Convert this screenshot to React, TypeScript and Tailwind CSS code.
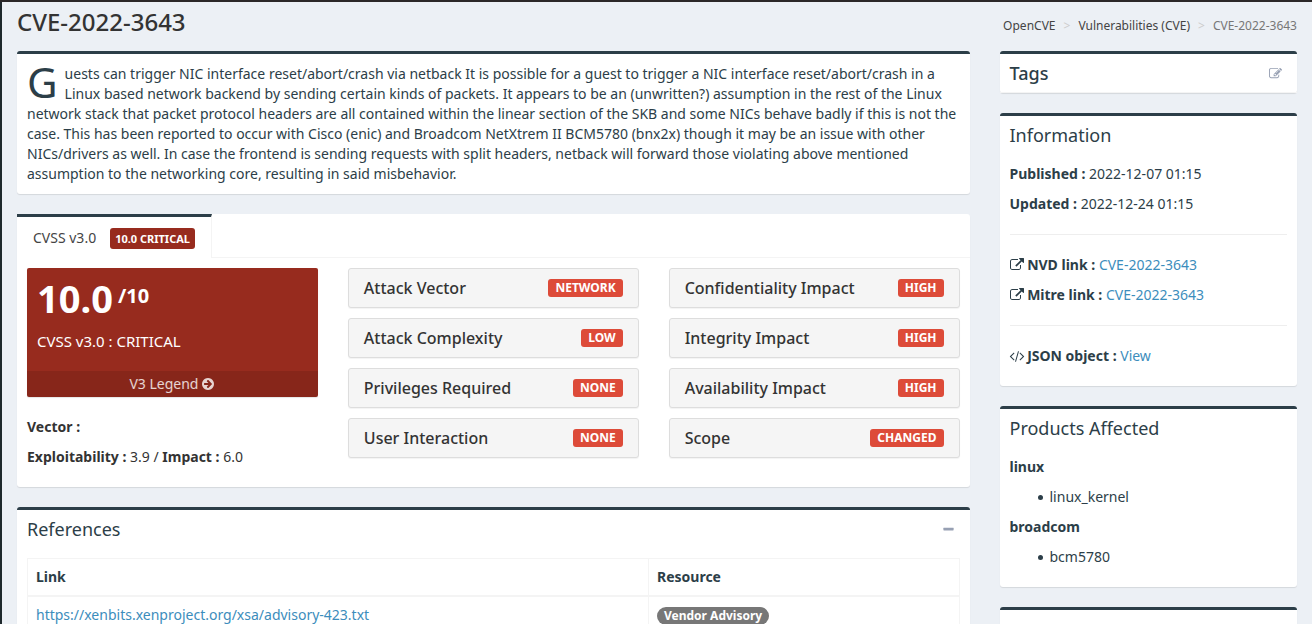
import { useState, type ReactNode } from 'react'

const ICONS = {
  external: 'M1408 928v320q0 119-84.5 203.5t-203.5 84.5h-832q-119 0-203.5-84.5t-84.5-203.5v-832q0-119 84.5-203.5t203.5-84.5h704q14 0 23 9t9 23v64q0 14-9 23t-23 9h-704q-66 0-113 47t-47 113v832q0 66 47 113t113 47h832q66 0 113-47t47-113v-320q0-14 9-23t23-9h64q14 0 23 9t9 23zm384-864v512q0 26-19 45t-45 19-45-19l-176-176-652 652q-10 10-23 10t-23-10l-114-114q-10-10-10-23t10-23l652-652-176-176q-19-19-19-45t19-45 45-19h512q26 0 45 19t19 45z',
  edit: 'M888 1184l116-116-152-152-116 116v56h96v96h56zm440-720q-16-16-33 1l-350 350q-17 17-1 33t33-1l350-350q17-17 1-33zm80 594v190q0 119-84.5 203.5t-203.5 84.5h-832q-119 0-203.5-84.5t-84.5-203.5v-832q0-119 84.5-203.5t203.5-84.5h832q63 0 117 25 15 7 18 23 3 17-9 29l-49 49q-14 14-32 8-23-6-45-6h-832q-66 0-113 47t-47 113v832q0 66 47 113t113 47h832q66 0 113-47t47-113v-126q0-13 9-22l64-64q15-15 35-7t20 29zm-96-738l288 288-672 672h-288v-288zm444 132l-92 92-288-288 92-92q28-28 68-28t68 28l152 152q28 28 28 68t-28 68z',
  arrow: 'M1413 896q0-27-18-45l-91-91-362-362q-18-18-45-18t-45 18l-91 91q-18 18-18 45t18 45l189 189h-502q-26 0-45 19t-19 45v128q0 26 19 45t45 19h502l-189 189q-18 18-18 45t18 45l91 91q18 18 45 18t45-18l362-362 91-91q18-18 18-45zm251 0q0 209-103 385.5t-279.5 279.5-385.5 103-385.5-103-279.5-279.5-103-385.5 103-385.5 279.5-279.5 385.5-103 385.5 103 279.5 279.5 103 385.5z',
  minus: 'M1600 736v192q0 40-28 68t-68 28h-1216q-40 0-68-28t-28-68v-192q0-40 28-68t68-28h1216q40 0 68 28t28 68z',
  code: 'M553 1399l-50 50q-10 10-23 10t-23-10l-466-466q-10-10-10-23t10-23l466-466q10-10 23-10t23 10l50 50q10 10 10 23t-10 23l-393 393 393 393q10 10 10 23t-10 23zm591-1067l-373 1291q-4 13-15.5 19.5t-23.5 2.5l-62-17q-13-4-19.5-15.5t-2.5-24.5l373-1291q4-13 15.5-19.5t23.5-2.5l62 17q13 4 19.5 15.5t2.5 24.5zm657 651l-466 466q-10 10-23 10t-23-10l-50-50q-10-10-10-23t10-23l393-393-393-393q-10-10-10-23t10-23l50-50q10-10 23-10t23 10l466 466q10 10 10 23t-10 23z',
}

const METRICS = [
  [
    { label: 'Attack Vector',       value: 'NETWORK' },
    { label: 'Attack Complexity',   value: 'LOW' },
    { label: 'Privileges Required', value: 'NONE' },
    { label: 'User Interaction',    value: 'NONE' },
  ],
  [
    { label: 'Confidentiality Impact', value: 'HIGH' },
    { label: 'Integrity Impact',       value: 'HIGH' },
    { label: 'Availability Impact',    value: 'HIGH' },
    { label: 'Scope',                  value: 'CHANGED' },
  ],
]

const PRODUCTS = [
  { vendor: 'linux',    products: ['linux_kernel'] },
  { vendor: 'broadcom', products: ['bcm5780'] },
]

function Icon({ name, className = 'size-3.5' }: { name: keyof typeof ICONS; className?: string }) {
  return (
    <svg viewBox="0 0 1792 1792" fill="currentColor" aria-hidden="true" className={`inline-block overflow-visible ${className}`}>
      <path d={ICONS[name]} />
    </svg>
  )
}

function Box({ children }: { children?: ReactNode }) {
  return (
    <section className="mb-5 rounded-[3px] border-t-3 border-[#2c3e48] bg-white shadow-[0_1px_1px_rgba(0,0,0,0.1)]">
      {children}
    </section>
  )
}

function BoxHeader({ title, bold, children }: { title: string; bold?: boolean; children?: ReactNode }) {
  return (
    <div className="flex items-center justify-between p-2.5">
      <h3 className={`text-[18px] leading-[18px] ${bold ? 'font-medium' : ''}`}>{title}</h3>
      {children}
    </div>
  )
}

function Link({ children }: { children: ReactNode }) {
  return <a href="#" className="text-[#3c8dbc] hover:text-[#72afd2]">{children}</a>
}

export default function App() {
  const [open, setOpen] = useState(true)

  return (
    <div className="min-h-screen border-t-2 border-[#2b2728] bg-[#ecf0f5] font-['Noto_Sans',sans-serif] text-sm leading-5 text-[#2c3e48]">
      <div className="min-h-screen border-l-2 border-[#1e282c]">
        <header className="flex items-center justify-between px-[15px] pt-1 pb-3">
          <h1 className="pb-0.5 text-2xl leading-[31px] font-medium text-[#333]">CVE-2022-3643</h1>
          <nav aria-label="Breadcrumb">
            <ol className="flex gap-2 pt-1.5 text-xs leading-5 text-[#444]">
              <li><a href="#">OpenCVE</a></li>
              <li aria-hidden="true" className="text-[#ccc]">&gt;</li>
              <li><a href="#">Vulnerabilities (CVE)</a></li>
              <li aria-hidden="true" className="text-[#ccc]">&gt;</li>
              <li className="text-[#777]">CVE-2022-3643</li>
            </ol>
          </nav>
        </header>

        <div className="flex items-start">
          <main className="w-3/4 px-[15px]">
            {/* Description */}
            <Box>
              <p className="p-2.5 first-letter:float-left first-letter:pr-[7px] first-letter:text-[42px] first-letter:leading-9">
                Guests can trigger NIC interface reset/abort/crash via netback It is possible for a guest to trigger a NIC interface reset/abort/crash in a Linux based network backend by sending certain kinds of packets. It appears to be an (unwritten?) assumption in the rest of the Linux network stack that packet protocol headers are all contained within the linear section of the SKB and some NICs behave badly if this is not the case. This has been reported to occur with Cisco (enic) and Broadcom NetXtrem II BCM5780 (bnx2x) though it may be an issue with other NICs/drivers as well. In case the frontend is sending requests with split headers, netback will forward those violating above mentioned assumption to the networking core, resulting in said misbehavior.
              </p>
            </Box>

            {/* CVSS */}
            <section className="mb-5 rounded-[3px] bg-white text-[#333] shadow-[0_1px_1px_rgba(0,0,0,0.1)]">
              <div className="flex h-11">
                <button type="button" className="flex items-baseline gap-3.5 border-t-3 border-r border-t-[#2c3e48] border-r-[#f4f4f4] px-4 pt-[11px] text-[#444]">
                  CVSS v3.0
                  <span className="rounded-[3px] bg-[#972b1e] px-[5px] text-[11px] leading-[21px] font-bold text-white">10.0 CRITICAL</span>
                </button>
                <div className="flex-1 border-b border-[#f4f4f4]" />
              </div>

              <div className="grid grid-cols-3 items-start gap-[30px] p-2.5">
                <div>
                  <div className="mb-5 overflow-hidden rounded-xs bg-[#972b1e] text-white shadow-[0_1px_1px_rgba(0,0,0,0.1)]">
                    <div className="h-[103px] p-2.5">
                      <h3 className="mb-3 flex items-start gap-[5px] text-[38px] leading-10 font-bold">
                        10.0 <span className="text-xl leading-9">/10</span>
                      </h3>
                      <p className="text-[15px] leading-[22px]">CVSS v3.0 : CRITICAL</p>
                    </div>
                    <a href="#" className="flex items-center justify-center gap-[3px] bg-black/10 py-[3px] text-white/80">
                      V3 Legend <Icon name="arrow" />
                    </a>
                  </div>
                  <p className="mb-2.5"><strong>Vector :</strong></p>
                  <p className="mb-2.5"><strong>Exploitability :</strong> 3.9 / <strong>Impact :</strong> 6.0</p>
                </div>

                {METRICS.map((column, i) => (
                  <div key={i} className="space-y-2.5">
                    {column.map(m => (
                      <div key={m.label} className="flex items-center justify-between rounded-[3px] border border-[#ddd] bg-[#f5f5f5] px-[15px] py-2.5 shadow-[0_1px_1px_rgba(0,0,0,0.05)]">
                        <h3 className="text-base leading-[18px] font-medium">{m.label}</h3>
                        <span className="rounded-[3px] bg-[#dd4b39] px-[7px] text-xs leading-[18px] font-bold text-white">{m.value}</span>
                      </div>
                    ))}
                  </div>
                ))}
              </div>
            </section>

            {/* References */}
            <Box>
              <BoxHeader title="References">
                <button type="button" aria-label="Collapse" onClick={() => setOpen(!open)} className="flex pr-[5px] text-[#97a0b3]">
                  <Icon name="minus" className="size-[13px]" />
                </button>
              </BoxHeader>
              {open && (
                <div className="p-2.5">
                  <table className="w-full table-fixed border-collapse border border-[#f4f4f4] text-left">
                    <thead>
                      <tr className="border-b-2 border-[#f4f4f4]">
                        <th className="w-2/3 border-r border-[#f4f4f4] p-2 font-bold">Link</th>
                        <th className="p-2 font-bold">Resource</th>
                      </tr>
                    </thead>
                    <tbody>
                      <tr>
                        <td className="border-r border-[#f4f4f4] p-2"><Link>https://xenbits.xenproject.org/xsa/advisory-423.txt</Link></td>
                        <td className="p-2">
                          <span className="inline-block rounded-full bg-[#777] px-[7px] text-xs leading-[18px] font-bold text-white">Vendor Advisory</span>
                        </td>
                      </tr>
                    </tbody>
                  </table>
                </div>
              )}
            </Box>
          </main>

          <aside className="w-1/4 px-[15px]">
            <Box>
              <div className="border-b border-[#f4f4f4]">
                <BoxHeader title="Tags" bold>
                  <button type="button" aria-label="Edit tags" className="flex pr-[5px] text-[#97a0b3]">
                    <Icon name="edit" className="size-[13px]" />
                  </button>
                </BoxHeader>
              </div>
            </Box>

            <Box>
              <BoxHeader title="Information" />
              <div className="px-2.5 pt-2.5 pb-5">
                <p className="mb-2.5"><strong>Published :</strong> 2022-12-07 01:15</p>
                <p><strong>Updated :</strong> 2022-12-24 01:15</p>
                <hr className="my-5 border-[#eee]" />
                <p className="mb-2.5"><Icon name="external" className="size-3.5 align-[-2px]" /> <strong>NVD link :</strong> <Link>CVE-2022-3643</Link></p>
                <p><Icon name="external" className="size-3.5 align-[-2px]" /> <strong>Mitre link :</strong> <Link>CVE-2022-3643</Link></p>
                <hr className="my-5 border-[#eee]" />
                <p><Icon name="code" className="size-3.5 align-[-2px]" /> <strong>JSON object :</strong> <Link>View</Link></p>
              </div>
            </Box>

            <Box>
              <BoxHeader title="Products Affected" />
              <div className="p-2.5">
                {PRODUCTS.map(({ vendor, products }) => (
                  <div key={vendor}>
                    <p className="mb-2.5"><strong>{vendor}</strong></p>
                    <ul className="mb-2.5 pl-7">
                      {products.map(p => (
                        <li key={p} className="flex items-center gap-[7px] before:size-[5px] before:rounded-full before:bg-[#2c3e48]">{p}</li>
                      ))}
                    </ul>
                  </div>
                ))}
              </div>
            </Box>

            <Box>
              <div className="h-10" />
            </Box>
          </aside>
        </div>
      </div>
    </div>
  )
}
